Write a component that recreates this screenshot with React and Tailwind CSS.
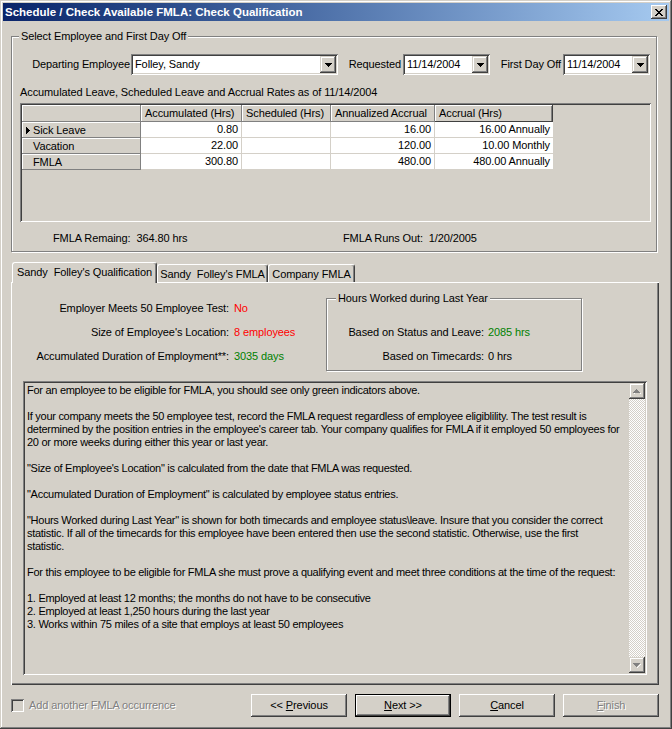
import React from 'react';

const leaveRows = [
  { name: 'Sick Leave', accumulated: '0.80', scheduled: '', annualized: '16.00', accrual: '16.00 Annually', current: true },
  { name: 'Vacation', accumulated: '22.00', scheduled: '', annualized: '120.00', accrual: '10.00 Monthly' },
  { name: 'FMLA', accumulated: '300.80', scheduled: '', annualized: '480.00', accrual: '480.00 Annually' },
];

const notes = [
  'For an employee to be eligible for FMLA, you should see only green indicators above.',
  '',
  'If your company meets the 50 employee test, record the FMLA request regardless of employee eligiblility. The test result is',
  "determined by the position entries in the employee's career tab. Your company qualifies for FMLA if it employed 50 employees for",
  '20 or more weeks during either this year or last year.',
  '',
  "\"Size of Employee's Location\" is calculated from the date that FMLA was requested.",
  '',
  '"Accumulated Duration of Employment" is calculated by employee status entries.',
  '',
  '"Hours Worked during Last Year" is shown for both timecards and employee status\\leave. Insure that you consider the correct',
  'statistic. If all of the timecards for this employee have been entered then use the second statistic. Otherwise, use the first',
  'statistic.',
  '',
  'For this employee to be eligible for FMLA she must prove a qualifying event and meet three conditions at the time of the request:',
  '',
  '1. Employed at least 12 months; the months do not have to be consecutive',
  '2. Employed at least 1,250 hours during the last year',
  '3. Works within 75 miles of a site that employs at least 50 employees',
];

const DownArrow = ({ color = '#000000' }) => (
  <svg width="7" height="4" viewBox="0 0 7 4" shapeRendering="crispEdges">
    <path d="M0 0h7v1h-1v1h-1v1h-1v1h-1v-1h-1v-1h-1v-1h-1z" fill={color} />
  </svg>
);

const DropButton = () => (
  <div className="flex h-[17px] w-[16px] items-center justify-center bg-[#d4d0c8] shadow-[inset_-1px_-1px_0_#404040,inset_1px_1px_0_#d4d0c8,inset_-2px_-2px_0_#808080,inset_2px_2px_0_#ffffff]">
    <DownArrow />
  </div>
);

const Combo = ({ value, width }) => (
  <div className={`flex h-[21px] bg-white p-[2px] shadow-[inset_1px_1px_0_#808080,inset_-1px_-1px_0_#ffffff,inset_2px_2px_0_#404040,inset_-2px_-2px_0_#d4d0c8] ${width}`}>
    <span className="flex-1 overflow-hidden whitespace-nowrap pl-[2px] leading-[17px]">{value}</span>
    <DropButton />
  </div>
);

const GroupBox = ({ title, titleLeft, className, children }) => (
  <div className={`relative border border-[#808080] shadow-[inset_1px_1px_0_#ffffff,1px_1px_0_#ffffff] ${className}`}>
    <span className={`absolute -top-[7px] whitespace-nowrap bg-[#d4d0c8] px-[2px] leading-[13px] ${titleLeft}`}>{title}</span>
    {children}
  </div>
);

const Button = ({ children, isDefault, disabled }) => (
  <div className={`flex h-[23px] w-[96px] items-center justify-center bg-[#d4d0c8] ${isDefault ? 'border border-black shadow-[inset_-1px_-1px_0_#404040,inset_1px_1px_0_#ffffff,inset_-2px_-2px_0_#808080]' : 'shadow-[inset_-1px_-1px_0_#404040,inset_1px_1px_0_#ffffff,inset_-2px_-2px_0_#808080]'} ${disabled ? 'text-[#808080] [text-shadow:1px_1px_0_#ffffff]' : ''}`}>
    <span className="whitespace-pre">{children}</span>
  </div>
);

const App = () => {
  return (
    <div className="flex h-[729px] w-[672px] flex-col bg-[#d4d0c8] p-[3px] font-['Liberation_Sans',Arial,sans-serif] text-[11px] leading-[13px] tracking-[-0.1px] text-black shadow-[inset_-1px_-1px_0_#404040,inset_1px_1px_0_#d4d0c8,inset_-2px_-2px_0_#808080,inset_2px_2px_0_#ffffff]">
      {/* Title bar */}
      <div className="flex h-[18px] items-center justify-between bg-linear-to-r from-[#0a246a] to-[#a6caf0] pl-[2px] pr-[2px]">
        <span className="whitespace-nowrap text-[11.5px] font-bold tracking-normal text-white">Schedule / Check Available FMLA: Check Qualification</span>
        <div className="flex h-[14px] w-[16px] items-center justify-center bg-[#d4d0c8] shadow-[inset_-1px_-1px_0_#404040,inset_1px_1px_0_#ffffff,inset_-2px_-2px_0_#808080]">
          <svg width="8" height="7" viewBox="0 0 8 7" shapeRendering="crispEdges">
            <path d="M0 0h2v1H0zM6 0h2v1H6zM1 1h2v1H1zM5 1h2v1H5zM2 2h4v1H2zM3 3h2v1H3zM2 4h4v1H2zM1 5h2v1H1zM5 5h2v1H5zM0 6h2v1H0zM6 6h2v1H6z" fill="#000000" />
          </svg>
        </div>
      </div>

      {/* Select Employee group */}
      <GroupBox title="Select Employee and First Day Off" titleLeft="left-[7px]" className="ml-[8px] mt-[15px] h-[216px] w-[646px] pt-[17px]">
        <div className="flex items-center">
          <span className="w-[119px] whitespace-nowrap pr-[1px] text-right">Departing Employee</span>
          <Combo value="Folley, Sandy" width="w-[207px]" />
          <span className="w-[65px] whitespace-nowrap pr-[2px] text-right">Requested</span>
          <Combo value="11/14/2004" width="w-[87px]" />
          <span className="w-[73px] whitespace-nowrap pr-[2px] text-right">First Day Off</span>
          <Combo value="11/14/2004" width="w-[87px]" />
        </div>

        <div className="ml-[8px] mt-[11px] whitespace-nowrap">Accumulated Leave, Scheduled Leave and Accrual Rates as of 11/14/2004</div>

        {/* Leave grid */}
        <div className="ml-[8px] mt-[4px] h-[119px] w-[631px] bg-[#d4d0c8] p-[2px] shadow-[inset_1px_1px_0_#808080,inset_-1px_-1px_0_#ffffff,inset_2px_2px_0_#404040,inset_-2px_-2px_0_#d4d0c8]">
          <div className="flex h-[17px]">
            <div className="w-[119px] shadow-[inset_-1px_-1px_0_#808080,inset_1px_1px_0_#ffffff]" />
            <div className="w-[101px] whitespace-nowrap pl-[4px] leading-[16px] shadow-[inset_-1px_-1px_0_#808080,inset_1px_1px_0_#ffffff]">Accumulated (Hrs)</div>
            <div className="w-[89px] whitespace-nowrap pl-[4px] leading-[16px] shadow-[inset_-1px_-1px_0_#808080,inset_1px_1px_0_#ffffff]">Scheduled (Hrs)</div>
            <div className="w-[104px] whitespace-nowrap pl-[4px] leading-[16px] shadow-[inset_-1px_-1px_0_#808080,inset_1px_1px_0_#ffffff]">Annualized Accrual</div>
            <div className="w-[118px] whitespace-nowrap pl-[4px] leading-[16px] shadow-[inset_-1px_-1px_0_#404040,inset_1px_1px_0_#ffffff,inset_-2px_0_0_#808080]">Accrual (Hrs)</div>
          </div>
          {leaveRows.map((row) => (
            <div key={row.name} className="flex h-[16px]">
              <div className="flex w-[119px] items-center shadow-[inset_-1px_-1px_0_#808080,inset_1px_1px_0_#ffffff]">
                <span className="flex w-[11px] justify-center">
                  {row.current && (
                    <svg width="4" height="7" viewBox="0 0 4 7" shapeRendering="crispEdges">
                      <path d="M0 0h1v1h1v1h1v1h1v1h-1v1h-1v1h-1v1h-1z" fill="#000000" />
                    </svg>
                  )}
                </span>
                <span className="whitespace-nowrap">{row.name}</span>
              </div>
              <div className="w-[101px] border-b border-r border-[#d4d0c8] bg-white pr-[3px] text-right leading-[15px]">{row.accumulated}</div>
              <div className="w-[89px] border-b border-r border-[#d4d0c8] bg-white pr-[3px] text-right leading-[15px]">{row.scheduled}</div>
              <div className="w-[104px] border-b border-r border-[#d4d0c8] bg-white pr-[3px] text-right leading-[15px]">{row.annualized}</div>
              <div className="w-[118px] whitespace-nowrap border-b border-[#d4d0c8] bg-white pr-[3px] text-right leading-[15px]">{row.accrual}</div>
            </div>
          ))}
        </div>

        <div className="mt-[10px] flex pl-[41px]">
          <span className="w-[290px] whitespace-nowrap">FMLA Remaing:&nbsp; 364.80 hrs</span>
          <span className="whitespace-nowrap">FMLA Runs Out:&nbsp; 1/20/2005</span>
        </div>
      </GroupBox>

      {/* Tabs */}
      <div className="relative z-10 ml-[9px] mt-[10px] flex h-[20px] items-end">
        <div className="-mb-[1px] flex h-[21px] w-[145px] items-start justify-center whitespace-pre rounded-t-[3px] border-l border-t border-r border-white border-r-[#404040] bg-[#d4d0c8] pt-[3px] shadow-[inset_-1px_0_0_#808080]">
          {"Sandy  Folley's Qualification"}
        </div>
        <div className="flex h-[18px] w-[111px] items-start justify-center whitespace-pre rounded-t-[3px] border-l border-t border-r border-white border-r-[#404040] bg-[#d4d0c8] pt-[3px] shadow-[inset_-1px_0_0_#808080]">
          {"Sandy  Folley's FMLA"}
        </div>
        <div className="flex h-[18px] w-[87px] items-start justify-center whitespace-pre rounded-t-[3px] border-l border-t border-r border-white border-r-[#404040] bg-[#d4d0c8] pt-[3px] shadow-[inset_-1px_0_0_#808080]">
          Company FMLA
        </div>
      </div>

      <div className="relative ml-[8px] flex h-[403px] w-[648px] flex-col shadow-[inset_1px_1px_0_#ffffff,inset_-1px_-1px_0_#404040,inset_-2px_-2px_0_#808080]">
        <div className="flex h-[99px]">
          <div className="w-[315px] pt-[14px] leading-[24px]">
            <div className="flex">
              <span className="w-[218px] whitespace-nowrap text-right">Employer Meets 50 Employee Test:</span>
              <span className="ml-[5px] text-[#ff0000]">No</span>
            </div>
            <div className="flex">
              <span className="w-[218px] whitespace-nowrap text-right">{"Size of Employee's Location:"}</span>
              <span className="ml-[5px] whitespace-nowrap text-[#ff0000]">8 employees</span>
            </div>
            <div className="flex">
              <span className="w-[218px] whitespace-nowrap text-right">Accumulated Duration of Employment**:</span>
              <span className="ml-[5px] whitespace-nowrap text-[#008000]">3035 days</span>
            </div>
          </div>
          <GroupBox title="Hours Worked during Last Year" titleLeft="left-[9px]" className="mt-[16px] h-[73px] w-[256px] pt-[21px] leading-[24px]">
            <div className="flex">
              <span className="w-[157px] whitespace-nowrap text-right">Based on Status and Leave:</span>
              <span className="ml-[4px] whitespace-nowrap text-[#008000]">2085 hrs</span>
            </div>
            <div className="flex">
              <span className="w-[157px] whitespace-nowrap text-right">Based on Timecards:</span>
              <span className="ml-[4px] whitespace-nowrap">0 hrs</span>
            </div>
          </GroupBox>
        </div>

        {/* Read-only notes */}
        <div className="ml-[12px] flex h-[294px] w-[624px] p-[2px] shadow-[inset_1px_1px_0_#808080,inset_-1px_-1px_0_#ffffff,inset_2px_2px_0_#404040,inset_-2px_-2px_0_#d4d0c8]">
          <div className="flex-1 overflow-hidden pl-[2px] pt-[1px] tracking-[-0.28px]">
            {notes.map((line, i) => (
              <div key={i} className="h-[13px] whitespace-pre">{line}</div>
            ))}
          </div>
          <div className="flex w-[16px] flex-col">
            <div className="flex h-[16px] items-center justify-center bg-[#d4d0c8] shadow-[inset_-1px_-1px_0_#404040,inset_1px_1px_0_#d4d0c8,inset_-2px_-2px_0_#808080,inset_2px_2px_0_#ffffff]">
              <svg width="8" height="5" viewBox="0 0 8 5" shapeRendering="crispEdges">
                <path d="M1 4h1v1H1zM2 3h1v1H2zM3 2h1v1H3zM4 1h1v1H4zM5 2h1v1H5zM6 3h1v1H6zM7 4h1v1H7z" fill="#ffffff" />
                <path d="M3 0h1v1h1v1h1v1h1v1H0V3h1V2h1V1h1z" fill="#808080" />
              </svg>
            </div>
            <div className="flex-1 bg-[image:repeating-conic-gradient(#ffffff_0%_25%,#d4d0c8_0%_50%)] bg-size-[2px_2px]" />
            <div className="flex h-[16px] items-center justify-center bg-[#d4d0c8] shadow-[inset_-1px_-1px_0_#404040,inset_1px_1px_0_#d4d0c8,inset_-2px_-2px_0_#808080,inset_2px_2px_0_#ffffff]">
              <svg width="8" height="5" viewBox="0 0 8 5" shapeRendering="crispEdges">
                <path d="M4 4h1v1H4zM5 3h1v1H5zM6 2h1v1H6zM7 1h1v1H7z" fill="#ffffff" />
                <path d="M0 0h7v1H6v1H5v1H4v1H3V3H2V2H1V1H0z" fill="#808080" />
              </svg>
            </div>
          </div>
        </div>
      </div>

      {/* Footer */}
      <div className="mt-[9px] flex h-[23px] items-center">
        <div className="ml-[8px] h-[13px] w-[13px] bg-[#d4d0c8] shadow-[inset_1px_1px_0_#808080,inset_-1px_-1px_0_#ffffff,inset_2px_2px_0_#404040,inset_-2px_-2px_0_#d4d0c8]" />
        <span className="ml-[5px] whitespace-nowrap text-[#808080] [text-shadow:1px_1px_0_#ffffff]">Add another FMLA occurrence</span>
        <div className="ml-auto mr-[10px] flex gap-[8px]">
          <Button>&lt;&lt; <span className="underline">P</span>revious</Button>
          <Button isDefault><span className="underline">N</span>ext &gt;&gt;</Button>
          <Button><span className="underline">C</span>ancel</Button>
          <Button disabled><span className="underline">F</span>inish</Button>
        </div>
      </div>
    </div>
  );
};

export default App;
